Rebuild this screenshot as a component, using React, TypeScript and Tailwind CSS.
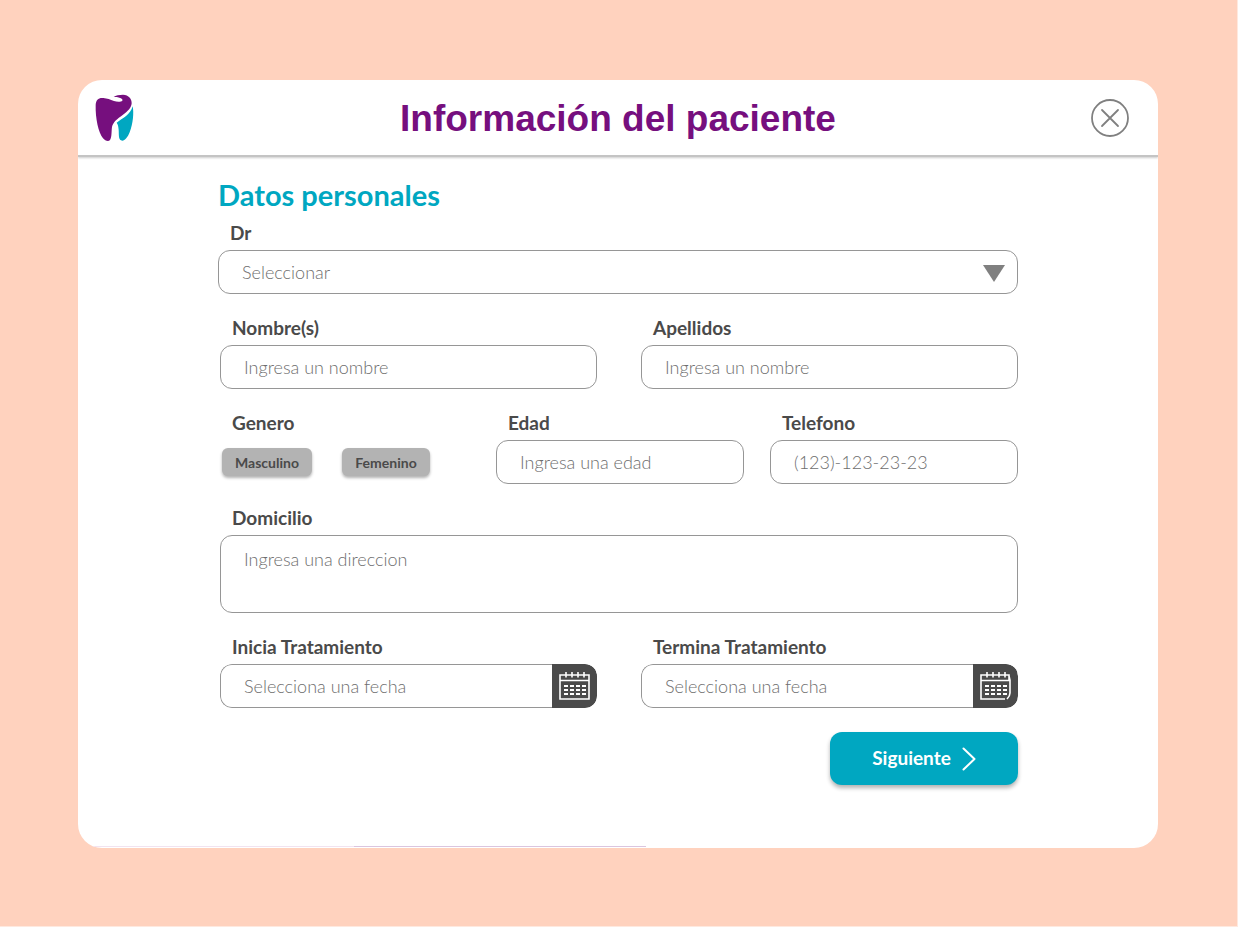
import React from "react";

const fieldBox =
  "h-[44px] w-full rounded-xl border border-[#969696] bg-white px-[23px] text-[18px] font-light text-[#6e6e6e] placeholder:text-[#6e6e6e] placeholder:opacity-100 outline-none focus:border-[#00a7c1]";

const labelText = "pl-3 text-[19px] leading-4 font-bold text-[#4a4a4a]";

function Field({
  id,
  label,
  className = "",
  children,
}: {
  id: string;
  label: string;
  className?: string;
  children: React.ReactNode;
}) {
  return (
    <div className={`flex min-w-0 flex-col gap-[9px] ${className}`}>
      <label htmlFor={id} className={labelText}>
        {label}
      </label>
      {children}
    </div>
  );
}

function ToothLogo() {
  return (
    <svg viewBox="76 70 117 144" className="h-12 w-[39px]" aria-hidden="true">
      <path
        fill="#760f7e"
        d="M78 104C78 87 88 80 101 82C113 83 121 87 133 91C142 94 154 94 158 90C160 86 156 83 149 81C143 79 137 80 132 79C138 74 149 72 160 72C177 73 187 84 186 98C185 111 176 121 159 133C143 144 130 155 127 169C125 182 127 199 121 208C116 214 106 210 100 203C86 186 77 142 78 104Z"
      />
      <path
        fill="#00a7c1"
        d="M189 107C193 126 190 160 180 185C173 203 163 213 154 209C146 206 148 190 147 178C146 167 145 162 141 156C159 143 182 132 189 107Z"
      />
    </svg>
  );
}

function CalendarIcon({ clipped = false }: { clipped?: boolean }) {
  return (
    <svg viewBox="0 0 32 30" className="h-[30px] w-8" fill="none" stroke="#fff" aria-hidden="true">
      {clipped ? (
        <path d="M29 9V4H1V28H25M29 5L30 9V22C30 24 29 26 27 28" strokeWidth="1.6" />
      ) : (
        <path d="M1 4H30V28H1Z" strokeWidth="1.6" />
      )}
      <path d="M1 9.5H30" strokeWidth="1.6" />
      <path d="M7 1V6.5M13 1V6.5M19 1V6.5M25 1V6.5" strokeWidth="1.6" />
      <path d="M5 15H27M5 19H27M5 23H27" strokeWidth="2" strokeDasharray="4 2" />
    </svg>
  );
}

function DateField({ id, label, clipped }: { id: string; label: string; clipped?: boolean }) {
  return (
    <Field id={id} label={label}>
      <div className="flex h-[44px] overflow-hidden rounded-xl">
        <input
          id={id}
          type="text"
          placeholder="Selecciona una fecha"
          className="min-w-0 flex-1 rounded-l-xl border border-r-0 border-[#969696] bg-white px-[23px] text-[18px] font-light text-[#6e6e6e] outline-none placeholder:text-[#6e6e6e] placeholder:opacity-100"
        />
        <button
          type="button"
          aria-label="Abrir calendario"
          className="flex w-[45px] shrink-0 items-center justify-center rounded-r-xl bg-[#4a4a4a]"
        >
          <CalendarIcon clipped={clipped} />
        </button>
      </div>
    </Field>
  );
}

const genderButton =
  "h-7 rounded-md bg-[#b3b3b3] text-[14px] font-bold text-[#4a4a4a] shadow-[0_2px_3px_rgba(0,0,0,0.3)]";

export default function App() {
  return (
    <main className="min-h-screen border-r border-b border-[#ffe9df] bg-[#ffd2be] pt-20 pr-[79px] pb-[78px] pl-[78px] font-[Lato,'Open_Sans',sans-serif]">
      <section className="flex min-h-[768px] flex-col overflow-hidden rounded-3xl bg-white">
        <header className="flex h-[77px] shrink-0 items-center justify-between border-b-2 border-[#c4c4c4] pr-[29px] pl-[17px] shadow-[0_1px_2px_rgba(0,0,0,0.2)]">
          <div className="w-[50px] shrink-0">
            <ToothLogo />
          </div>
          <h1 className="pt-[2px] font-[Arial_Rounded_MT_Bold,'Liberation_Sans',sans-serif] text-[37px] font-bold text-[#760f7e]">
            Información del paciente
          </h1>
          <button type="button" aria-label="Cerrar">
            <svg viewBox="0 0 38 38" className="size-[38px]" fill="none" stroke="#808080" aria-hidden="true">
              <circle cx="19" cy="19" r="18" strokeWidth="1.8" />
              <path d="M11 11L27 27M27 11L11 27" strokeWidth="1.8" strokeLinecap="round" />
            </svg>
          </button>
        </header>

        <form className="mx-auto w-full max-w-[800px] flex-1 pt-[22px]" onSubmit={(e) => e.preventDefault()}>
          <h2 className="mb-[14px] text-[29px] leading-8 font-bold text-[#00a7c1]">Datos personales</h2>

          <Field id="doctor" label="Dr">
            <div className="relative">
              <select id="doctor" className={`${fieldBox} appearance-none`}>
                <option>Seleccionar</option>
              </select>
              <svg
                viewBox="0 0 22 17"
                className="pointer-events-none absolute top-[15px] right-[13px] h-[17px] w-[22px]"
                aria-hidden="true"
              >
                <path d="M0 0H22L11 17Z" fill="#808080" />
              </svg>
            </div>
          </Field>

          <div className="mt-[26px] ml-[2px] flex flex-col gap-[26px]">
            <div className="grid grid-cols-2 gap-[44px]">
              <Field id="nombre" label="Nombre(s)">
                <input id="nombre" type="text" placeholder="Ingresa un nombre" className={fieldBox} />
              </Field>
              <Field id="apellidos" label="Apellidos">
                <input id="apellidos" type="text" placeholder="Ingresa un nombre" className={fieldBox} />
              </Field>
            </div>

            <div className="grid grid-cols-[1fr_248px_248px] gap-[26px]">
              <div role="group" aria-labelledby="genero" className="flex flex-col gap-[17px]">
                <span id="genero" className={labelText}>
                  Genero
                </span>
                <div className="flex gap-[30px] pl-[2px]">
                  <button type="button" className={`${genderButton} w-[90px]`}>
                    Masculino
                  </button>
                  <button type="button" className={`${genderButton} w-[88px]`}>
                    Femenino
                  </button>
                </div>
              </div>
              <Field id="edad" label="Edad">
                <input id="edad" type="text" placeholder="Ingresa una edad" className={fieldBox} />
              </Field>
              <Field id="telefono" label="Telefono">
                <input id="telefono" type="tel" placeholder="(123)-123-23-23" className={fieldBox} />
              </Field>
            </div>

            <Field id="domicilio" label="Domicilio">
              <textarea
                id="domicilio"
                placeholder="Ingresa una direccion"
                className="block h-[78px] w-full resize-none rounded-xl border border-[#969696] bg-white px-[23px] py-[11px] text-[18px] leading-6 font-light text-[#6e6e6e] outline-none placeholder:text-[#6e6e6e] placeholder:opacity-100"
              />
            </Field>

            <div className="grid grid-cols-2 gap-[44px]">
              <DateField id="inicio" label="Inicia Tratamiento" />
              <DateField id="termino" label="Termina Tratamiento" clipped />
            </div>
          </div>

          <div className="mt-6 flex justify-end">
            <button
              type="submit"
              className="flex h-[53px] w-[188px] items-center justify-center gap-[11px] rounded-xl bg-[#00a7c1] text-[19px] font-bold text-white shadow-[0_3px_4px_rgba(0,0,0,0.3)]"
            >
              Siguiente
              <svg viewBox="0 0 14 24" className="h-6 w-[14px]" fill="none" stroke="#fff" aria-hidden="true">
                <path d="M1.5 1.5L12.5 12L1.5 22.5" strokeWidth="2" strokeLinecap="round" strokeLinejoin="round" />
              </svg>
            </button>
          </div>
        </form>

        <div className="mb-px flex h-px">
          <span className="w-[276px] bg-[#f2e3f0]" />
          <span className="w-[292px] bg-[#dbc5df]" />
        </div>
      </section>
    </main>
  );
}
